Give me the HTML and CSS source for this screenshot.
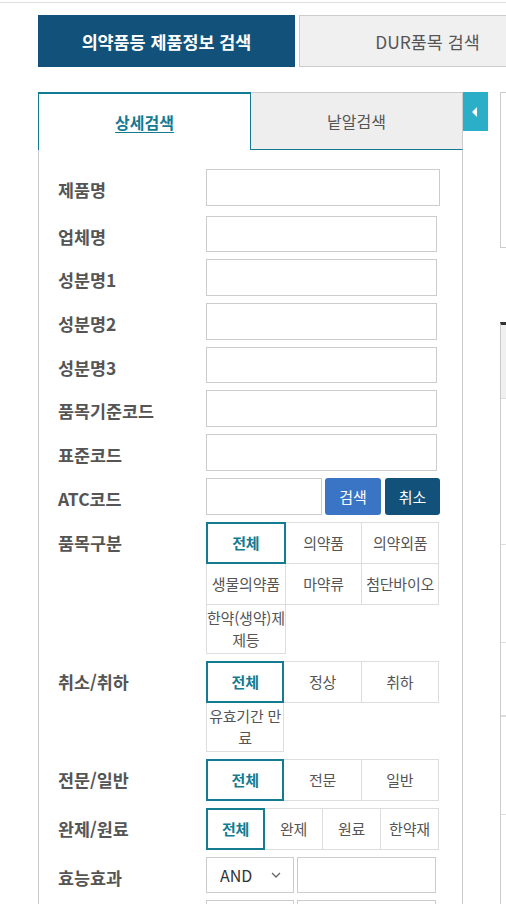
FILE: index.html
```html
<!DOCTYPE html>
<html lang="ko">

<head>
    <meta charset="UTF-8">
    <meta name="viewport" content="width=device-width, initial-scale=1.0">
    <title>의약품등 제품정보 검색</title>
    <link rel="stylesheet" href="styles.css">
</head>

<body>
    <div class="top-line"></div>
    <div class="page">
        <ul class="main-tabs">
            <li class="on">의약품등 제품정보 검색</li>
            <li>DUR품목 검색</li>
        </ul>

        <div class="content">
            <div class="search-panel">
                <ul class="sub-tabs">
                    <li class="on"><span>상세검색</span></li>
                    <li><span>낱알검색</span></li>
                </ul>

                <div class="search-form">
                    <div class="row first">
                        <div class="row-title">제품명</div>
                        <div class="field"><input type="text"></div>
                    </div>
                    <div class="row">
                        <div class="row-title">업체명</div>
                        <div class="field"><input type="text"></div>
                    </div>
                    <div class="row">
                        <div class="row-title">성분명1</div>
                        <div class="field"><input type="text"></div>
                    </div>
                    <div class="row">
                        <div class="row-title">성분명2</div>
                        <div class="field"><input type="text"></div>
                    </div>
                    <div class="row">
                        <div class="row-title">성분명3</div>
                        <div class="field"><input type="text"></div>
                    </div>
                    <div class="row">
                        <div class="row-title">품목기준코드</div>
                        <div class="field"><input type="text"></div>
                    </div>
                    <div class="row">
                        <div class="row-title">표준코드</div>
                        <div class="field"><input type="text"></div>
                    </div>
                    <div class="row">
                        <div class="row-title">ATC코드</div>
                        <div class="field">
                            <input type="text" class="atc-input">
                            <button class="btn btn-search">검색</button>
                            <button class="btn btn-cancel">취소</button>
                        </div>
                    </div>
                    <div class="row">
                        <div class="row-title">품목구분</div>
                        <ul class="opt-list">
                            <li class="on">전체</li>
                            <li>의약품</li>
                            <li>의약외품</li>
                            <li>생물의약품</li>
                            <li>마약류</li>
                            <li>첨단바이오</li>
                            <li>한약(생약)제<br>제등</li>
                        </ul>
                    </div>
                    <div class="row">
                        <div class="row-title">취소/취하</div>
                        <ul class="opt-list">
                            <li class="on">전체</li>
                            <li>정상</li>
                            <li>취하</li>
                            <li>유효기간 만<br>료</li>
                        </ul>
                    </div>
                    <div class="row">
                        <div class="row-title">전문/일반</div>
                        <ul class="opt-list">
                            <li class="on">전체</li>
                            <li>전문</li>
                            <li>일반</li>
                        </ul>
                    </div>
                    <div class="row">
                        <div class="row-title">완제/원료</div>
                        <ul class="opt-list col4">
                            <li class="on">전체</li>
                            <li>완제</li>
                            <li>원료</li>
                            <li>한약재</li>
                        </ul>
                    </div>
                    <div class="row">
                        <div class="row-title">효능효과</div>
                        <div class="field">
                            <div class="select">
                                <span>AND</span>
                                <svg width="10" height="6" viewBox="0 0 10 6"><path d="M1 1l4 4 4-4" fill="none" stroke="#666" stroke-width="1.3"/></svg>
                            </div>
                            <input type="text" class="cond-input">
                        </div>
                    </div>
                    <!-- next condition row, only its top edge shows -->
                    <div class="row">
                        <div class="row-title"></div>
                        <div class="field">
                            <div class="select"></div>
                            <input type="text" class="cond-input">
                        </div>
                    </div>
                </div>
            </div>

            <button class="fold-btn"></button>

            <div class="result-area">
                <div class="summary-box"></div>
                <div class="result-table">
                    <div class="thead"></div>
                    <div class="tr tall"></div>
                    <div class="tr mid"></div>
                    <div class="tr short"></div>
                    <div class="tr mid"></div>
                    <div class="tr mid"></div>
                </div>
            </div>
        </div>
    </div>
</body>

</html>
```

FILE: styles.css
```css
* {
    box-sizing: border-box;
}

html,
body {
    overflow: hidden;
}

body {
    margin: 0;
    font-family: "Noto Sans CJK KR", "Noto Sans", sans-serif;
    color: #555;
    background: #fff;
}

ul {
    list-style: none;
    margin: 0;
    padding: 0;
}

.top-line {
    height: 3px;
    border-bottom: 1px solid #ddd;
}

.page {
    width: 900px;
    padding: 12px 0 0 38px;
}

/* main tabs */
.main-tabs {
    display: flex;
    gap: 4px;
    height: 52px;
    margin-bottom: 25px;
}

.main-tabs li {
    width: 257px;
    display: flex;
    align-items: center;
    justify-content: center;
    font-size: 17.4px;
    color: #555;
    background: #f0f0f0;
    border: 1px solid #ccc;
}

.main-tabs li.on {
    background: #12527a;
    border-color: #12527a;
    color: #fff;
    font-weight: 700;
}

.content {
    display: flex;
    align-items: flex-start;
}

/* left search panel */
.search-panel {
    width: 425px;
    flex: none;
}

.sub-tabs {
    display: flex;
    height: 58px;
}

.sub-tabs li {
    flex: 1;
    display: flex;
    align-items: center;
    justify-content: center;
    font-size: 16px;
    color: #555;
    background: #eee;
    border-top: 1px solid #ccc;
    border-right: 1px solid #ccc;
    border-bottom: 1px solid #137a93;
}

.sub-tabs li.on {
    background: #fff;
    border: 1px solid #137a93;
    border-top-width: 2px;
    border-bottom: 0;
    color: #137a93;
    font-weight: 700;
}

.sub-tabs li.on span {
    text-decoration: underline;
    text-underline-offset: 3px;
}

.search-form {
    height: 780px;
    padding: 19px 22px 0 19px;
    border-left: 1px solid #ccc;
    border-right: 1px solid #ccc;
}

.row {
    display: flex;
    align-items: flex-start;
    margin-bottom: 7px;
}

.row.first {
    margin-bottom: 10px;
}

.row-title {
    width: 148px;
    flex: none;
    padding-top: 10px;
    line-height: 22px;
    font-size: 17.4px;
    font-weight: 700;
    color: #555;
}

.field {
    display: flex;
}

input {
    width: 231px;
    height: 36.7px;
    margin: 0;
    border: 1px solid #ccc;
    background: #fff;
    font-family: inherit;
}

.first input {
    width: 234px;
}

.field .atc-input {
    width: 116px;
    margin-right: 3px;
}

.btn {
    height: 36.7px;
    border: none;
    border-radius: 3px;
    color: #fff;
    font-size: 15px;
    font-family: inherit;
    padding: 0;
}

.btn-search {
    width: 56px;
    margin-right: 4px;
    background: #3a74c4;
}

.btn-cancel {
    width: 55px;
    background: #12527a;
}

/* option buttons */
.opt-list {
    width: 233px;
    display: grid;
    grid-template-columns: repeat(3, 1fr);
    padding: 1px 0 0 1px;
}

.opt-list.col4 {
    grid-template-columns: repeat(4, 1fr);
}

.opt-list li {
    min-height: 42px;
    margin: -1px 0 0 -1px;
    padding: 2px 0;
    display: flex;
    align-items: center;
    justify-content: center;
    text-align: center;
    white-space: nowrap;
    line-height: 22px;
    font-size: 15px;
    letter-spacing: -0.2px;
    color: #555;
    border: 1px solid #ddd;
}

.opt-list li.on {
    position: relative;
    z-index: 1;
    border: 2px solid #157b90;
    color: #157b90;
    font-weight: 700;
}

.select {
    width: 88px;
    height: 36.7px;
    margin-right: 3px;
    padding: 0 12px 0 13px;
    display: flex;
    align-items: center;
    justify-content: space-between;
    border: 1px solid #ccc;
    font-size: 16px;
    color: #333;
}

.field .cond-input {
    width: 139px;
}

/* fold button */
.fold-btn {
    width: 25px;
    height: 39px;
    flex: none;
    padding: 0;
    border: none;
    background: #2bafc8;
    display: flex;
    align-items: center;
    justify-content: center;
}

.fold-btn::before {
    content: "";
    margin-right: 2px;
    border-right: 5px solid #fff;
    border-top: 5px solid transparent;
    border-bottom: 5px solid transparent;
}

/* right result area */
.result-area {
    width: 300px;
    flex: none;
    margin-left: 12px;
}

.summary-box {
    height: 156px;
    margin-bottom: 74px;
    border: 1px solid #ccc;
}

.result-table {
    border-top: 3px solid #333;
    border-left: 1px solid #ccc;
}

.thead {
    height: 73px;
    background: #f0f0f0;
}

.tr {
    border-top: 1px solid #ddd;
}

.tr.tall {
    height: 146px;
}

.tr.mid {
    height: 98px;
}

.tr.short {
    height: 74px;
    border-bottom: 1px solid #ddd;
}
```
